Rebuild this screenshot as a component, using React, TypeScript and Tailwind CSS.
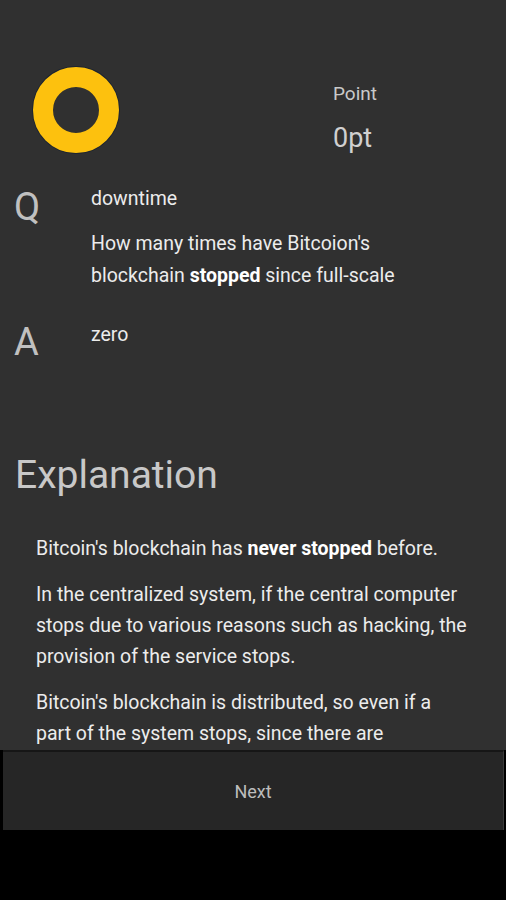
export default function App() {
  return (
    <div className="flex h-[900px] w-[506px] flex-col overflow-hidden bg-black font-['Roboto',sans-serif]">
      <div className="h-[750px] overflow-hidden bg-[#303030]">
        <div className="flex h-[183px] items-start pt-[67px]">
          <div className="ml-[33px] h-[86px] w-[86px] rounded-full border-[20px] border-[#fdc10e] shadow-[0_0_0_1px_#1c2430]" />
          <div className="ml-[214px] flex flex-col pt-[13px]">
            <span className="text-[19px] leading-[28px] text-[#c9c9c9]">Point</span>
            <span className="mt-[10px] text-[27px] leading-[40px] text-[#d0d0d0]">0pt</span>
          </div>
        </div>

        <div className="flex">
          <div className="w-[91px] pl-[14px] pt-[4px] text-[38px] leading-[40px] text-[#c0c0c0]">Q</div>
          <div className="w-[372px]">
            <div className="text-[19.5px] leading-[32px] text-[#ececec]">downtime</div>
            <div className="mt-[13px] text-[19.5px] leading-[32px] text-[#ececec]">
              How many times have Bitcoion's
              <br />
              blockchain <b className="font-bold text-white">stopped</b> since full-scale
            </div>
          </div>
        </div>

        <div className="mt-[27px] flex">
          <div className="w-[91px] pl-[14px] pt-[3px] text-[38px] leading-[40px] text-[#c0c0c0]">A</div>
          <div className="text-[19.5px] leading-[32px] text-[#ececec]">zero</div>
        </div>

        <h2 className="mt-[89px] pl-[15px] text-[39px] leading-[48px] text-[#c8c8c8]">Explanation</h2>

        <div className="mt-[34px] w-[468px] pl-[36px] text-[19.5px] leading-[31px] text-[#ececec]">
          <p>
            Bitcoin's blockchain has <b className="font-bold text-white">never stopped</b> before.
          </p>
          <p className="mt-[15px]">
            In the centralized system, if the central computer stops due to various reasons such as hacking, the
            provision of the service stops.
          </p>
          <p className="mt-[15px]">
            Bitcoin's blockchain is distributed, so even if a part of the system stops, since there are
          </p>
        </div>
      </div>

      <button
        type="button"
        className="ml-[3px] flex h-[80px] w-[501px] items-center justify-center border-t-2 border-r border-t-[#161616] border-r-[#3a3a3a] bg-[#262626] text-[18px] text-[#bdbdbd]"
      >
        Next
      </button>
      <div className="flex-1 bg-black" />
    </div>
  )
}
